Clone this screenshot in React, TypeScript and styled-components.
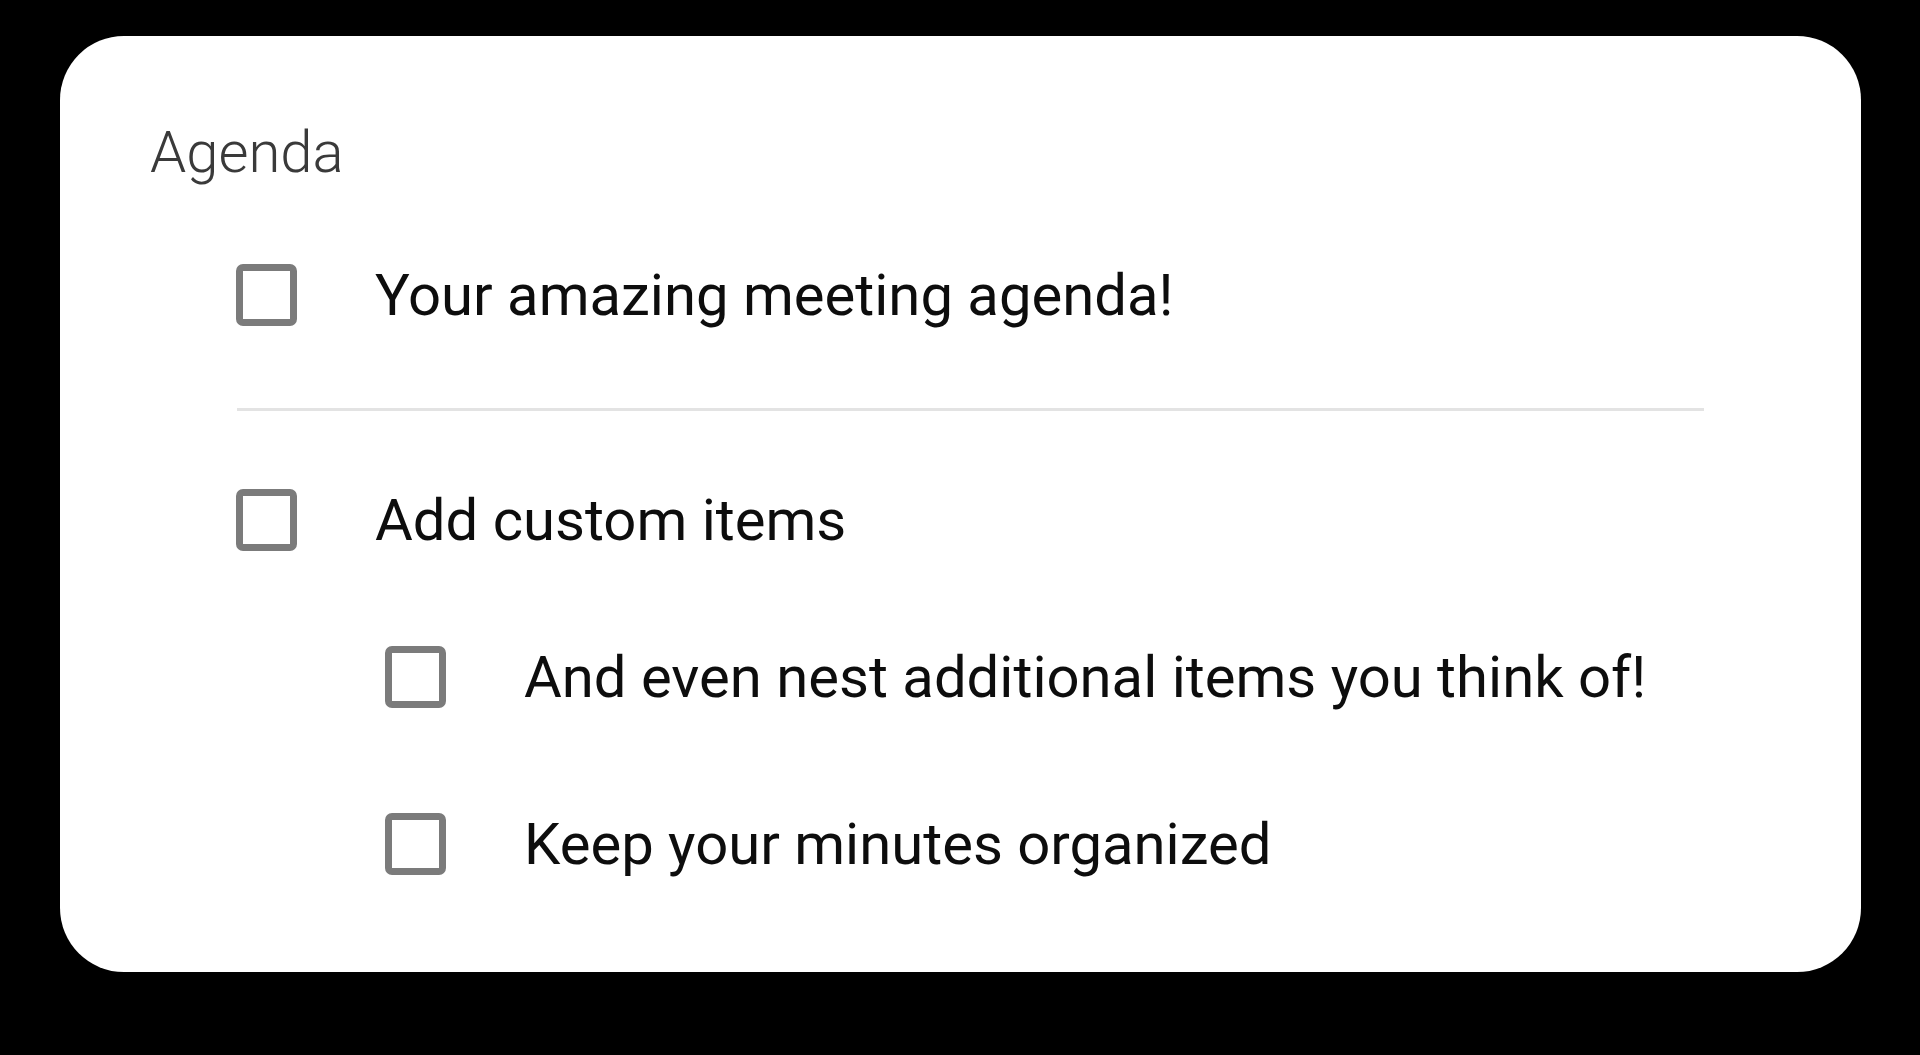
import React from "react";
import styled, { createGlobalStyle } from "styled-components";

const Global = createGlobalStyle`
  html, body { margin: 0; padding: 0; background: #000; }
  body { font-family: Roboto, "Noto Sans", sans-serif; }
`;

const Page = styled.div`
  width: 1920px;
  height: 1055px;
  background: #000;
  padding: 36px 0 0 60px;
  box-sizing: border-box;
`;

const Card = styled.div`
  width: 1801px;
  height: 936px;
  background: #fff;
  border-radius: 64px;
  box-sizing: border-box;
  padding: 87px 157px 0 90px;
  display: flex;
  flex-direction: column;
`;

const Title = styled.h2`
  margin: 0;
  font-family: Roboto, sans-serif;
  font-weight: 300;
  font-size: 58px;
  line-height: 1;
  color: #3a3a3a;
`;

const List = styled.div`
  display: flex;
  flex-direction: column;
  padding-left: 86px;
  margin-top: 64px;
`;

const Row = styled.div<{ $indent?: boolean }>`
  display: flex;
  align-items: center;
  gap: 78px;
  height: 100px;
  padding-left: ${(p) => (p.$indent ? "149px" : "0")};
`;

const Box = styled.span`
  width: 61px;
  height: 62px;
  box-sizing: border-box;
  border: 7px solid #7b7b7b;
  border-radius: 7px;
  flex: none;
`;

const Label = styled.span`
  font-family: Roboto, sans-serif;
  font-size: 58px;
  line-height: 1;
  color: #0d0d0d;
`;

const Divider = styled.hr`
  border: none;
  height: 3px;
  background: #e3e3e3;
  margin: 63px 0 59px 1px;
`;

const Nested = styled.div`
  display: flex;
  flex-direction: column;
  gap: 67px;
  margin-top: 57px;
`;

export default function App() {
  return (
    <>
      <Global />
      <Page>
        <Card>
          <Title>Agenda</Title>
          <List>
            <Row>
              <Box />
              <Label>Your amazing meeting agenda!</Label>
            </Row>
            <Divider />
            <Row>
              <Box />
              <Label>Add custom items</Label>
            </Row>
            <Nested>
              <Row $indent>
                <Box />
                <Label>And even nest additional items you think of!</Label>
              </Row>
              <Row $indent>
                <Box />
                <Label>Keep your minutes organized</Label>
              </Row>
            </Nested>
          </List>
        </Card>
      </Page>
    </>
  );
}
